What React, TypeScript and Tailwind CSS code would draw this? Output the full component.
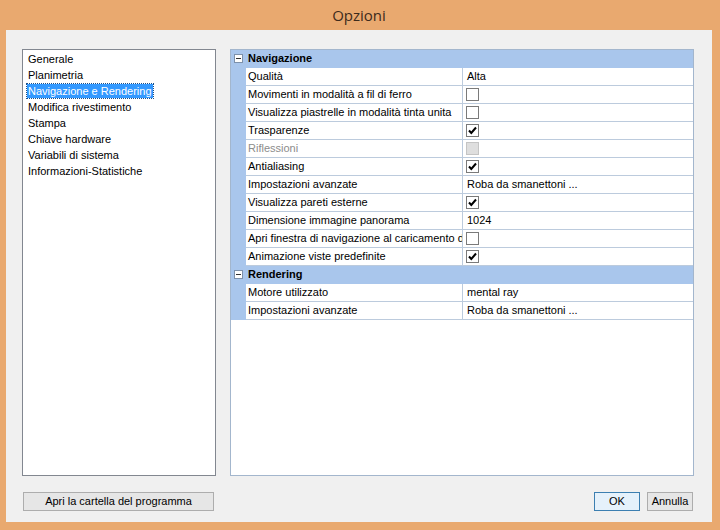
import React from 'react';

type Row =
  | { kind: 'header'; label: string }
  | { kind: 'text'; label: string; value: string }
  | { kind: 'check'; label: string; checked: boolean; disabled?: boolean };

const rows: Row[] = [
  { kind: 'header', label: 'Navigazione' },
  { kind: 'text', label: 'Qualità', value: 'Alta' },
  { kind: 'check', label: 'Movimenti in modalità a fil di ferro', checked: false },
  { kind: 'check', label: 'Visualizza piastrelle in modalità tinta unita', checked: false },
  { kind: 'check', label: 'Trasparenze', checked: true },
  { kind: 'check', label: 'Riflessioni', checked: false, disabled: true },
  { kind: 'check', label: 'Antialiasing', checked: true },
  { kind: 'text', label: 'Impostazioni avanzate', value: 'Roba da smanettoni ...' },
  { kind: 'check', label: 'Visualizza pareti esterne', checked: true },
  { kind: 'text', label: 'Dimensione immagine panorama', value: '1024' },
  { kind: 'check', label: 'Apri finestra di navigazione al caricamento del progetto', checked: false },
  { kind: 'check', label: 'Animazione viste predefinite', checked: true },
  { kind: 'header', label: 'Rendering' },
  { kind: 'text', label: 'Motore utilizzato', value: 'mental ray' },
  { kind: 'text', label: 'Impostazioni avanzate', value: 'Roba da smanettoni ...' },
];

const pages = [
  'Generale',
  'Planimetria',
  'Navigazione e Rendering',
  'Modifica rivestimento',
  'Stampa',
  'Chiave hardware',
  'Variabili di sistema',
  'Informazioni-Statistiche',
];

function CheckBox({ checked, disabled }: { checked: boolean; disabled?: boolean }) {
  return (
    <div
      className={
        disabled
          ? 'w-[13px] h-[13px] border border-[#c4c4c4] bg-[#dedede]'
          : 'w-[13px] h-[13px] border border-[#7a7a7a] bg-white flex items-center justify-center'
      }
    >
      {checked && (
        <svg width="11" height="11" viewBox="0 0 11 11">
          <path d="M2 5.5 L4.3 8 L9 2.5" fill="none" stroke="#000" strokeWidth="2" />
        </svg>
      )}
    </div>
  );
}

function GridRow({ row }: { row: Row }) {
  if (row.kind === 'header') {
    return (
      <div className="h-[18px] flex items-center bg-[#a9c6ec] pb-[1px]">
        <div className="w-[15px] flex justify-center">
          <div className="w-[9px] h-[9px] border border-[#7d91ab] bg-white flex items-center justify-center">
            <div className="w-[5px] h-[1px] bg-[#333]" />
          </div>
        </div>
        <span className="pl-[2px] font-bold text-[11px] text-black">{row.label}</span>
      </div>
    );
  }
  return (
    <div className="h-[18px] flex">
      <div className="w-[15px] bg-[#a9c6ec]" />
      <div className="flex-1 flex border-b border-[#bccbdd] bg-white">
        <div
          className={
            'w-[217px] border-r border-[#bccbdd] pl-[2px] flex items-center overflow-hidden whitespace-nowrap ' +
            (row.kind === 'check' && row.disabled ? 'text-[#8c8c8c]' : 'text-black')
          }
        >
          {row.label}
        </div>
        <div className="flex-1 flex items-center pl-[3px]">
          {row.kind === 'text' ? (
            <span className="pl-[1px]">{row.value}</span>
          ) : (
            <CheckBox checked={row.checked} disabled={row.disabled} />
          )}
        </div>
      </div>
    </div>
  );
}

export default function App() {
  return (
    <div className="w-[720px] h-[530px] bg-[#e9a96f] flex flex-col pl-[6px] pr-[8px] pb-[8px] font-['Liberation_Sans',Arial,sans-serif]">
      {/* Title bar */}
      <div className="h-[30px] flex items-center justify-center">
        <span className="text-[15px] text-[#3d2b1c] font-['Open_Sans','Noto_Sans',sans-serif]">Opzioni</span>
      </div>

      <div className="flex-1 bg-[#f0f0f0] flex flex-col pt-[19px] pl-[16px] pr-[18px] pb-[11px]">
        <div className="flex gap-[14px] h-[427px]">
          {/* Page list */}
          <div className="w-[194px] border border-[#828790] bg-white pt-[1px] pl-[4px] text-[11px] text-black">
            {pages.map((p) => (
              <div key={p} className="h-[16px] flex items-center">
                {p === 'Navigazione e Rendering' ? (
                  <span className="bg-[#3399ff] text-white px-[1px] leading-[14px] outline outline-1 outline-dotted outline-[#1a4f8a]">
                    {p}
                  </span>
                ) : (
                  <span className="px-[1px]">{p}</span>
                )}
              </div>
            ))}
          </div>

          {/* Property grid */}
          <div className="w-[464px] border border-[#a3b6cd] bg-white text-[11px]">
            {rows.map((r, i) => (
              <GridRow key={i} row={r} />
            ))}
          </div>
        </div>

        <div className="mt-[16px] flex items-center text-[11px] text-black">
          <button className="ml-[1px] w-[191px] h-[19px] border border-[#adadad] bg-[#e6e6e6] flex items-center justify-center">
            Apri la cartella del programma
          </button>
          <div className="flex-1" />
          <button className="w-[46px] h-[19px] border border-[#3c7fb1] bg-[#e5f1fb] flex items-center justify-center">
            OK
          </button>
          <button className="ml-[7px] mr-[1px] w-[46px] h-[19px] border border-[#adadad] bg-[#e6e6e6] flex items-center justify-center">
            Annulla
          </button>
        </div>
      </div>
    </div>
  );
}
